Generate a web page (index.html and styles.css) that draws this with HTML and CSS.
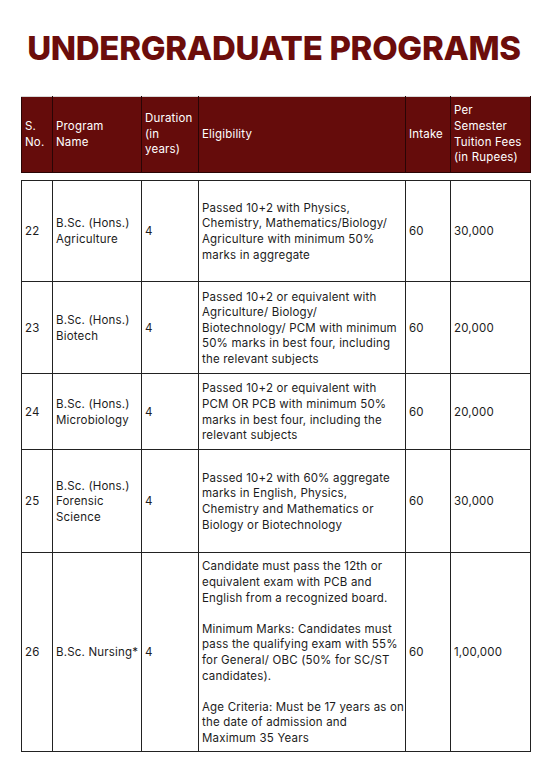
FILE: index.html
```html
<!DOCTYPE html>
<html>
<head>
<meta charset="utf-8">
<link rel="stylesheet" href="styles.css">
</head>
<body>
<div class="page">
  <h1 class="title">UNDERGRADUATE PROGRAMS</h1>
  <table class="tbl head">
    <colgroup><col class="c1"><col class="c2"><col class="c3"><col class="c4"><col class="c5"><col class="c6"></colgroup>
    <tr>
      <th>S.<br>No.</th>
      <th>Program<br>Name</th>
      <th>Duration<br>(in<br>years)</th>
      <th>Eligibility</th>
      <th>Intake</th>
      <th>Per<br>Semester<br>Tuition Fees<br>(in Rupees)</th>
    </tr>
  </table>
  <table class="tbl body">
    <colgroup><col class="c1"><col class="c2"><col class="c3"><col class="c4"><col class="c5"><col class="c6"></colgroup>
    <tr class="r1">
      <td>22</td>
      <td>B.Sc. (Hons.)<br>Agriculture</td>
      <td>4</td>
      <td>Passed 10+2 with Physics,<br>Chemistry, Mathematics/Biology/<br>Agriculture with minimum 50%<br>marks in aggregate</td>
      <td>60</td>
      <td>30,000</td>
    </tr>
    <tr class="r2">
      <td>23</td>
      <td>B.Sc. (Hons.)<br>Biotech</td>
      <td>4</td>
      <td>Passed 10+2 or equivalent with<br>Agriculture/ Biology/<br>Biotechnology/ PCM with minimum<br>50% marks in best four, including<br>the relevant subjects</td>
      <td>60</td>
      <td>20,000</td>
    </tr>
    <tr class="r3">
      <td>24</td>
      <td>B.Sc. (Hons.)<br>Microbiology</td>
      <td>4</td>
      <td>Passed 10+2 or equivalent with<br>PCM OR PCB with minimum 50%<br>marks in best four, including the<br>relevant subjects</td>
      <td>60</td>
      <td>20,000</td>
    </tr>
    <tr class="r4">
      <td>25</td>
      <td>B.Sc. (Hons.)<br>Forensic<br>Science</td>
      <td>4</td>
      <td>Passed 10+2 with 60% aggregate<br>marks in English, Physics,<br>Chemistry and Mathematics or<br>Biology or Biotechnology</td>
      <td>60</td>
      <td>30,000</td>
    </tr>
    <tr class="r5">
      <td>26</td>
      <td>B.Sc. Nursing*</td>
      <td>4</td>
      <td>
        <p class="para">Candidate must pass the 12th or<br>equivalent exam with PCB and<br>English from a recognized board.</p>
        <p class="para">Minimum Marks: Candidates must<br>pass the qualifying exam with 55%<br>for General/ OBC (50% for SC/ST<br>candidates).</p>
        <p class="para">Age Criteria: Must be 17 years as on<br>the date of admission and<br>Maximum 35 Years</p>
      </td>
      <td>60</td>
      <td>1,00,000</td>
    </tr>
  </table>
</div>
</body>
</html>
```
FILE: styles.css
```css
html, body {
  margin: 0;
  padding: 0;
  background: #ffffff;
}
.page {
  width: 548px;
  padding-top: 28px;
}
.title {
  margin: 0;
  text-align: center;
  font-family: Inter, "Noto Sans", sans-serif;
  font-weight: 800;
  font-size: 33px;
  line-height: 40px;
  color: #6c0d0b;
  letter-spacing: -0.3px;
}
.tbl {
  border-collapse: collapse;
  table-layout: fixed;
  width: 509px;
  margin-left: 21px;
  font-family: Inter, "Noto Sans", sans-serif;
  font-size: 11.5px;
  line-height: 15.6px;
  letter-spacing: 0.18px;
}
.c1 { width: 31px; }
.c2 { width: 89px; }
.c3 { width: 57px; }
.c4 { width: 207px; }
.c5 { width: 45px; }
.c6 { width: 80px; }
.head {
  margin-top: 28px;
}
.head th {
  background: #650c0b;
  color: #ffffff;
  font-weight: 400;
  text-align: left;
  vertical-align: middle;
  height: 75px;
  padding: 0 1px 0 3px;
  border: 1px solid #2a0505;
  white-space: nowrap;
}
.head tr th { border-top-color: #d8d8d8; }
.body {
  margin-top: 7px;
}
.body td {
  color: #1c1c1c;
  text-align: left;
  vertical-align: middle;
  padding: 2px 1px 0 3px;
  border: 1.5px solid #222222;
  white-space: nowrap;
}
.r1 td { height: 98px; }
.r2 td { height: 89px; }
.r3 td { height: 73px; }
.r4 td { height: 100px; }
.r5 td { height: 196px; }
.para {
  margin: 0 0 15.6px 0;
}
.para:last-child { margin-bottom: 0; }
```
